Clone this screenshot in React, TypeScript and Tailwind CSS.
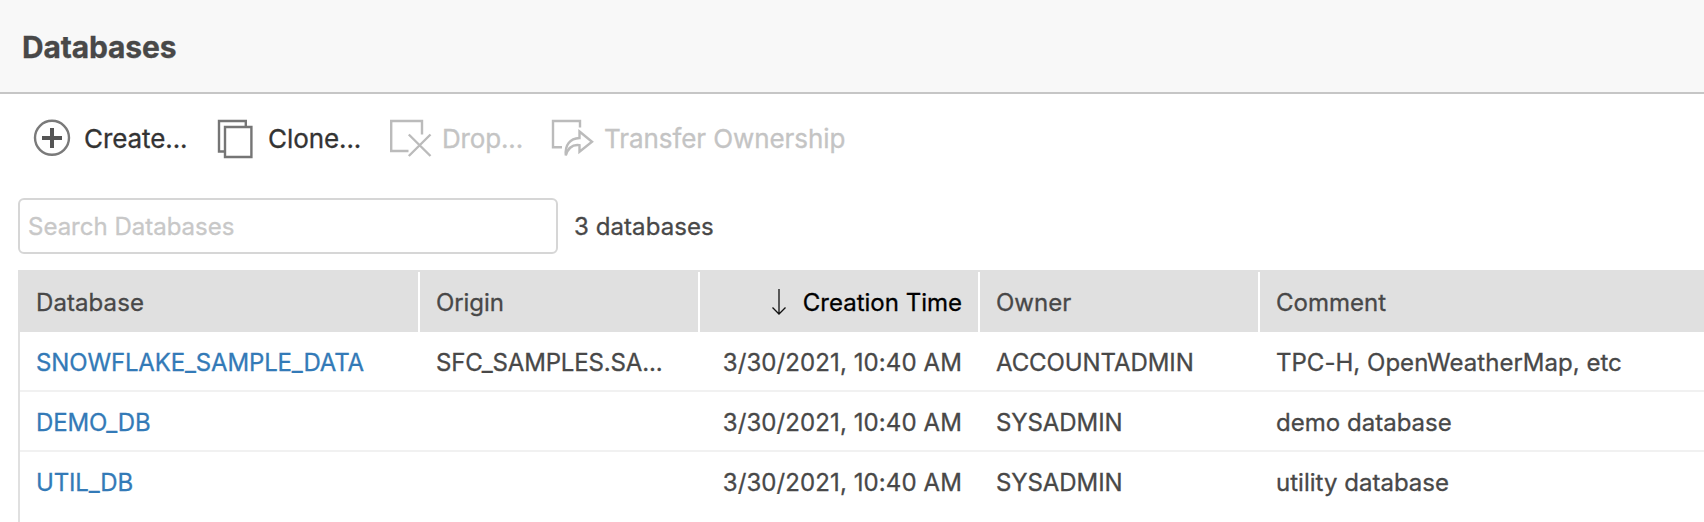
import type { ReactNode } from 'react';

type DatabaseRow = {
  name: string;
  origin: string;
  created: string;
  owner: string;
  comment: string;
};

const rows: DatabaseRow[] = [
  { name: 'SNOWFLAKE_SAMPLE_DATA', origin: 'SFC_SAMPLES.SA...', created: '3/30/2021, 10:40 AM', owner: 'ACCOUNTADMIN', comment: 'TPC-H, OpenWeatherMap, etc' },
  { name: 'DEMO_DB', origin: '', created: '3/30/2021, 10:40 AM', owner: 'SYSADMIN', comment: 'demo database' },
  { name: 'UTIL_DB', origin: '', created: '3/30/2021, 10:40 AM', owner: 'SYSADMIN', comment: 'utility database' },
];

const columns = 'grid grid-cols-[400px_280px_280px_280px_1fr]';

function CreateIcon() {
  return (
    <svg width="40" height="40" viewBox="0 0 40 40" fill="none" className="shrink-0">
      <circle cx="20" cy="18.800" r="17" stroke="#7a7a7a" strokeWidth="2.400" />
      <path d="M20 9v20M10 19h20" stroke="#555" strokeWidth="4" />
    </svg>
  );
}

function CloneIcon() {
  return (
    <svg width="40" height="40" viewBox="0 0 40 40" fill="none" stroke="#757575" strokeWidth="2.400" className="shrink-0">
      <path d="M9 32.500H3V2h26.800v5.500" />
      <path d="M9 8h26.400v30H9z" />
    </svg>
  );
}

function DropIcon() {
  return (
    <svg width="44" height="40" viewBox="0 0 44 40" fill="none" stroke="#bbb" strokeWidth="2.400" className="shrink-0">
      <path d="M19.500 32H2.200V2H33V15.500" />
      <path d="M19.800 15.500l21.700 21.500M41.500 15.500L19.800 37" />
    </svg>
  );
}

function TransferIcon() {
  return (
    <svg width="46" height="42" viewBox="0 0 46 42" fill="none" stroke="#bbb" strokeWidth="2.400" className="shrink-0">
      <path d="M12 29.300H3V3h27v6.500" />
      <path d="M29.500 13.500l12.500 10.200-12.500 10v-6.500c-7-1-11.500 3-13.700 10.300 -1-10.500 4-17 13.700-17.500z" />
    </svg>
  );
}

function ToolbarButton({ icon, label, className }: { icon: ReactNode; label: string; className: string }) {
  return (
    <button type="button" className={`flex h-[42px] items-center text-[26px] leading-[42px] whitespace-nowrap ${className}`}>
      {icon}
      <span>{label}</span>
    </button>
  );
}

function HeaderCell({ children, className = '' }: { children: ReactNode; className?: string }) {
  return <div className={`border-r-2 border-white pl-4 ${className}`}>{children}</div>;
}

export default function App() {
  return (
    <div className="flex h-[522px] w-[1704px] flex-col overflow-hidden bg-white font-['Inter',sans-serif] text-[24px] text-[#484848] [-webkit-text-stroke:0.3px]">
      <header className="flex h-[94px] shrink-0 items-center border-b-2 border-[#c6c6c6] bg-[#f8f8f8] pt-px pl-[22px]">
        <h1 className="text-[30px] leading-9 font-bold tracking-[-0.15px]">Databases</h1>
      </header>

      <div className="flex h-[104px] shrink-0 items-start pt-6 pl-8 tracking-[-0.08px] text-[#333]">
        <ToolbarButton icon={<CreateIcon />} label="Create..." className="w-[184px] gap-3" />
        <ToolbarButton icon={<CloneIcon />} label="Clone..." className="w-[173px] gap-3" />
        <ToolbarButton icon={<DropIcon />} label="Drop..." className="w-[161px] gap-[9px] tracking-[-0.15px] text-[#c4c4c4]" />
        <ToolbarButton icon={<TransferIcon />} label="Transfer Ownership" className="gap-2 text-[#c4c4c4]" />
      </div>

      <div className="flex h-14 shrink-0 items-center gap-4 pl-[18px]">
        <input
          type="text"
          placeholder="Search Databases"
          className="h-14 w-[540px] rounded-md border-2 border-[#d6d6d6] px-2 outline-none placeholder:text-[#c8c8c8]"
        />
        <span className="pt-0.5 tracking-[0.08px]">3 databases</span>
      </div>

      <div className="mt-4 ml-[18px] flex-1 border-t-2 border-l-2 border-[#e0e0e0]">
        <div className={`${columns} h-[60px] bg-[#e0e0e0] leading-[62px]`}>
          <HeaderCell className="tracking-[0.08px]">Database</HeaderCell>
          <HeaderCell className="tracking-[-0.08px]">Origin</HeaderCell>
          <HeaderCell className="flex items-center justify-end gap-4 pr-4 text-black">
            <svg width="16" height="28" viewBox="0 0 16 28" fill="none" stroke="#111" strokeWidth="1.300">
              <path d="M8 0v25M1.500 18.500L8 25l6.500-6.500" />
            </svg>
            <span>Creation Time</span>
          </HeaderCell>
          <HeaderCell>Owner</HeaderCell>
          <div className="pl-4">Comment</div>
        </div>
        {rows.map((row) => (
          <div key={row.name} className={`${columns} h-[60px] border-b-2 border-[#f1f1f1] leading-[62px] whitespace-nowrap last:border-b-0`}>
            <div className="pl-4 tracking-[-0.15px] text-[#337ab7]">{row.name}</div>
            <div className="pl-4 tracking-[-0.15px]">{row.origin}</div>
            <div className="pr-[18px] text-right tracking-[0.1px]">{row.created}</div>
            <div className="pl-4 tracking-[-0.08px]">{row.owner}</div>
            <div className="pl-4 tracking-[0.02px]">{row.comment}</div>
          </div>
        ))}
      </div>
    </div>
  );
}
